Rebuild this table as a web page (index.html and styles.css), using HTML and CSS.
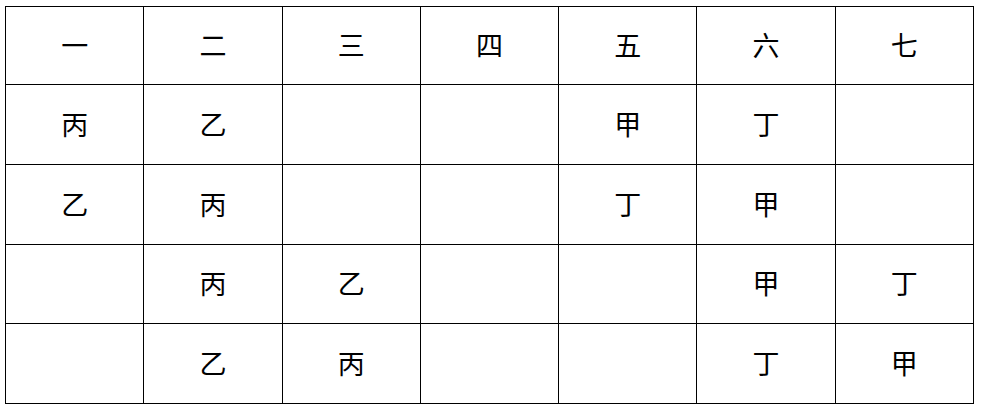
FILE: index.html
```html
<!DOCTYPE html>
<html lang="zh">
<head>
<meta charset="utf-8">
<link rel="stylesheet" href="styles.css">
</head>
<body>
<table class="grid">
  <colgroup>
    <col class="c"><col class="c"><col class="c"><col class="c"><col class="c"><col class="c"><col class="c">
  </colgroup>
  <tr class="r0"><td>一</td><td>二</td><td>三</td><td>四</td><td>五</td><td>六</td><td>七</td></tr>
  <tr class="r1"><td>丙</td><td>乙</td><td></td><td></td><td>甲</td><td>丁</td><td></td></tr>
  <tr class="r1"><td>乙</td><td>丙</td><td></td><td></td><td>丁</td><td>甲</td><td></td></tr>
  <tr class="r2"><td></td><td>丙</td><td>乙</td><td></td><td></td><td>甲</td><td>丁</td></tr>
  <tr class="r1"><td></td><td>乙</td><td>丙</td><td></td><td></td><td>丁</td><td>甲</td></tr>
</table>
</body>
</html>
```
FILE: styles.css
```css
html, body {
  margin: 0;
  padding: 0;
  background: #ffffff;
}
body {
  padding: 6px 0 0 5px;
}
.grid {
  border-collapse: collapse;
  table-layout: fixed;
  width: 969px;
  font-family: "Noto Sans CJK SC", sans-serif;
  font-size: 27px;
  color: #000;
}
.grid td {
  border: 1px solid #000;
  padding: 0 0 3px 0;
  text-align: center;
  vertical-align: middle;
  line-height: 1;
}
.r0 { height: 78px; }
.r1 { height: 80px; }
.r2 { height: 79px; }
```
